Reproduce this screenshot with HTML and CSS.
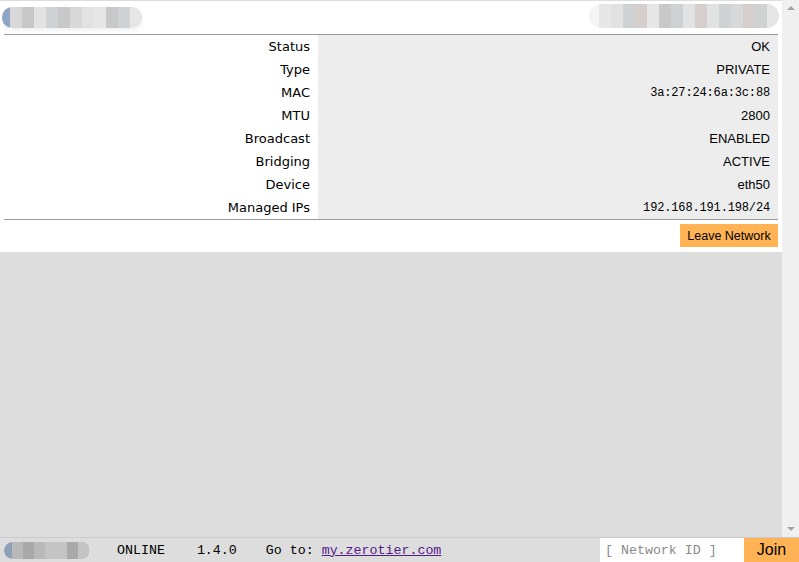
FILE: index.html
```html
<!DOCTYPE html>
<html>
<head>
<meta charset="utf-8">
<link rel="stylesheet" href="styles.css">
</head>
<body>
<div class="app">
  <div class="main">
    <div class="content">
      <div class="network">
        <div class="header">
          <div class="blur blur-left">
            <span class="cap"></span>
            <span class="px p1"></span><span class="px p2"></span><span class="px p3"></span><span class="px p4"></span><span class="px p2"></span><span class="px p1"></span><span class="px p3"></span><span class="px p5"></span><span class="px p2"></span><span class="px p4"></span><span class="px p5"></span>
          </div>
          <div class="blur blur-right">
            <span class="px p5"></span><span class="px p3"></span><span class="px p4"></span><span class="px p6"></span><span class="px p5"></span><span class="px p2"></span><span class="px p4"></span><span class="px p3"></span><span class="px p6"></span><span class="px p3"></span><span class="px p4"></span><span class="px p1"></span><span class="px p6"></span><span class="px p4"></span><span class="px p5"></span>
          </div>
        </div>
        <div class="info-wrap">
          <table class="info">
            <tr><td class="lbl">Status</td><td class="val">OK</td></tr>
            <tr><td class="lbl">Type</td><td class="val">PRIVATE</td></tr>
            <tr><td class="lbl">MAC</td><td class="val mono">3a:27:24:6a:3c:88</td></tr>
            <tr><td class="lbl">MTU</td><td class="val">2800</td></tr>
            <tr><td class="lbl">Broadcast</td><td class="val">ENABLED</td></tr>
            <tr><td class="lbl">Bridging</td><td class="val">ACTIVE</td></tr>
            <tr><td class="lbl">Device</td><td class="val">eth50</td></tr>
            <tr><td class="lbl">Managed IPs</td><td class="val mono">192.168.191.198/24</td></tr>
          </table>
        </div>
        <div class="actions">
          <button class="leave">Leave Network</button>
        </div>
      </div>
    </div>
    <div class="scrollbar">
      <span class="arrow up"></span>
      <span class="arrow down"></span>
    </div>
  </div>
  <div class="bottom">
    <div class="blur blur-bottom">
      <span class="cap dark"></span>
      <span class="px q1"></span><span class="px q2"></span><span class="px q1"></span><span class="px q3"></span><span class="px q3"></span><span class="px q2"></span><span class="px q3"></span>
    </div>
    <span class="status">ONLINE</span>
    <span class="version">1.4.0</span>
    <span class="goto">Go to: <a href="#">my.zerotier.com</a></span>
    <span class="spacer"></span>
    <input class="netid" type="text" placeholder="[ Network ID ]">
    <button class="join">Join</button>
  </div>
</div>
</body>
</html>
```

FILE: styles.css
```css
* { box-sizing: border-box; }
html, body { margin: 0; padding: 0; }
body {
  width: 799px;
  height: 562px;
  overflow: hidden;
  background: #fff;
  font-family: "DejaVu Sans", Verdana, sans-serif;
}
.app {
  display: flex;
  flex-direction: column;
  height: 562px;
}
.main {
  display: flex;
  height: 537px;
}
.content {
  flex: 1;
  background: #dddddd;
  border-top: 1px solid #dcdcdc;
}
.network {
  background: #fff;
  padding: 0 4px;
}
.header {
  height: 33px;
  display: flex;
  justify-content: space-between;
  align-items: flex-start;
}
.blur {
  display: flex;
  align-items: stretch;
  overflow: hidden;
}
.blur-left {
  margin-top: 6px;
  margin-left: -2px;
  height: 21px;
  border-radius: 10px;
  box-shadow: 0 3px 4px #f2f2f2;
}
.blur-right {
  margin-top: 3px;
  margin-right: -1px;
  height: 24px;
  border-radius: 12px;
  padding-left: 10px;
  background: #f4f4f4;
}
.cap {
  width: 8px;
  background: #8fa3c4;
  border-radius: 10px 0 0 10px;
}
.cap.dark { background: #8f9fb8; }
.px {
  width: 12px;
  display: block;
}
.p1 { background: #d8d8d8; }
.p2 { background: #c8c8c8; }
.p3 { background: #e2e2e2; }
.p4 { background: #cfd2d3; }
.p5 { background: #e6e6e6; }
.p6 { background: #d4cfcd; }
.q1 { background: #b9b9b9; }
.q2 { background: #a9a9a9; }
.q3 { background: #c4c4c4; }

.info-wrap {
  border-top: 1px solid #9a9a9a;
  border-bottom: 1px solid #9a9a9a;
}
.info {
  width: 100%;
  border-collapse: collapse;
  font-size: 13px;
}
.info td {
  height: 23px;
  padding: 0 8px;
  text-align: right;
  color: #000;
}
.lbl {
  width: 314px;
  background: #fff;
}
.val {
  background: #ededed;
  font-family: "Liberation Sans", Arial, sans-serif;
}
.val.mono {
  font-family: "Liberation Mono", monospace;
  font-size: 12px;
  letter-spacing: -0.15px;
}
.actions {
  display: flex;
  justify-content: flex-end;
  padding: 4px 0 5px;
}
.leave {
  height: 23px;
  width: 98px;
  border: none;
  background: #ffb354;
  font-family: "Liberation Sans", Arial, sans-serif;
  font-size: 12.5px;
  color: #000;
  padding: 0;
}
.scrollbar {
  width: 17px;
  background: #f0f0f0;
  display: flex;
  flex-direction: column;
  justify-content: space-between;
  align-items: center;
  padding: 6px 0 6px;
}
.arrow {
  width: 0;
  height: 0;
  border-left: 4px solid transparent;
  border-right: 4px solid transparent;
}
.arrow.up { border-bottom: 4px solid #a3a3a3; }
.arrow.down { border-top: 4px solid #a3a3a3; }

.bottom {
  height: 25px;
  background: #dddddd;
  border-top: 1px solid #cacaca;
  display: flex;
  align-items: center;
  font-family: "Liberation Mono", monospace;
  font-size: 13.3px;
  color: #000;
}
.blur-bottom {
  margin-left: 4px;
  height: 17px;
  width: 86px;
  border-radius: 9px;
  align-self: center;
}
.blur-bottom .px { width: 11px; }
.status { margin-left: 27px; }
.version { margin-left: 32px; }
.goto { margin-left: 29px; }
.goto a { color: #551a8b; }
.spacer { flex: 1; }
.netid {
  width: 144px;
  height: 24px;
  border: none;
  background: #fff;
  font-family: "Liberation Mono", monospace;
  font-size: 13.3px;
  padding: 0 5px;
  outline: none;
}
.netid::placeholder { color: #8a8a8a; }
.join {
  width: 55px;
  height: 24px;
  border: none;
  background: #ffb354;
  font-family: "Liberation Sans", Arial, sans-serif;
  font-size: 16px;
  color: #000;
  padding: 0;
}
```
